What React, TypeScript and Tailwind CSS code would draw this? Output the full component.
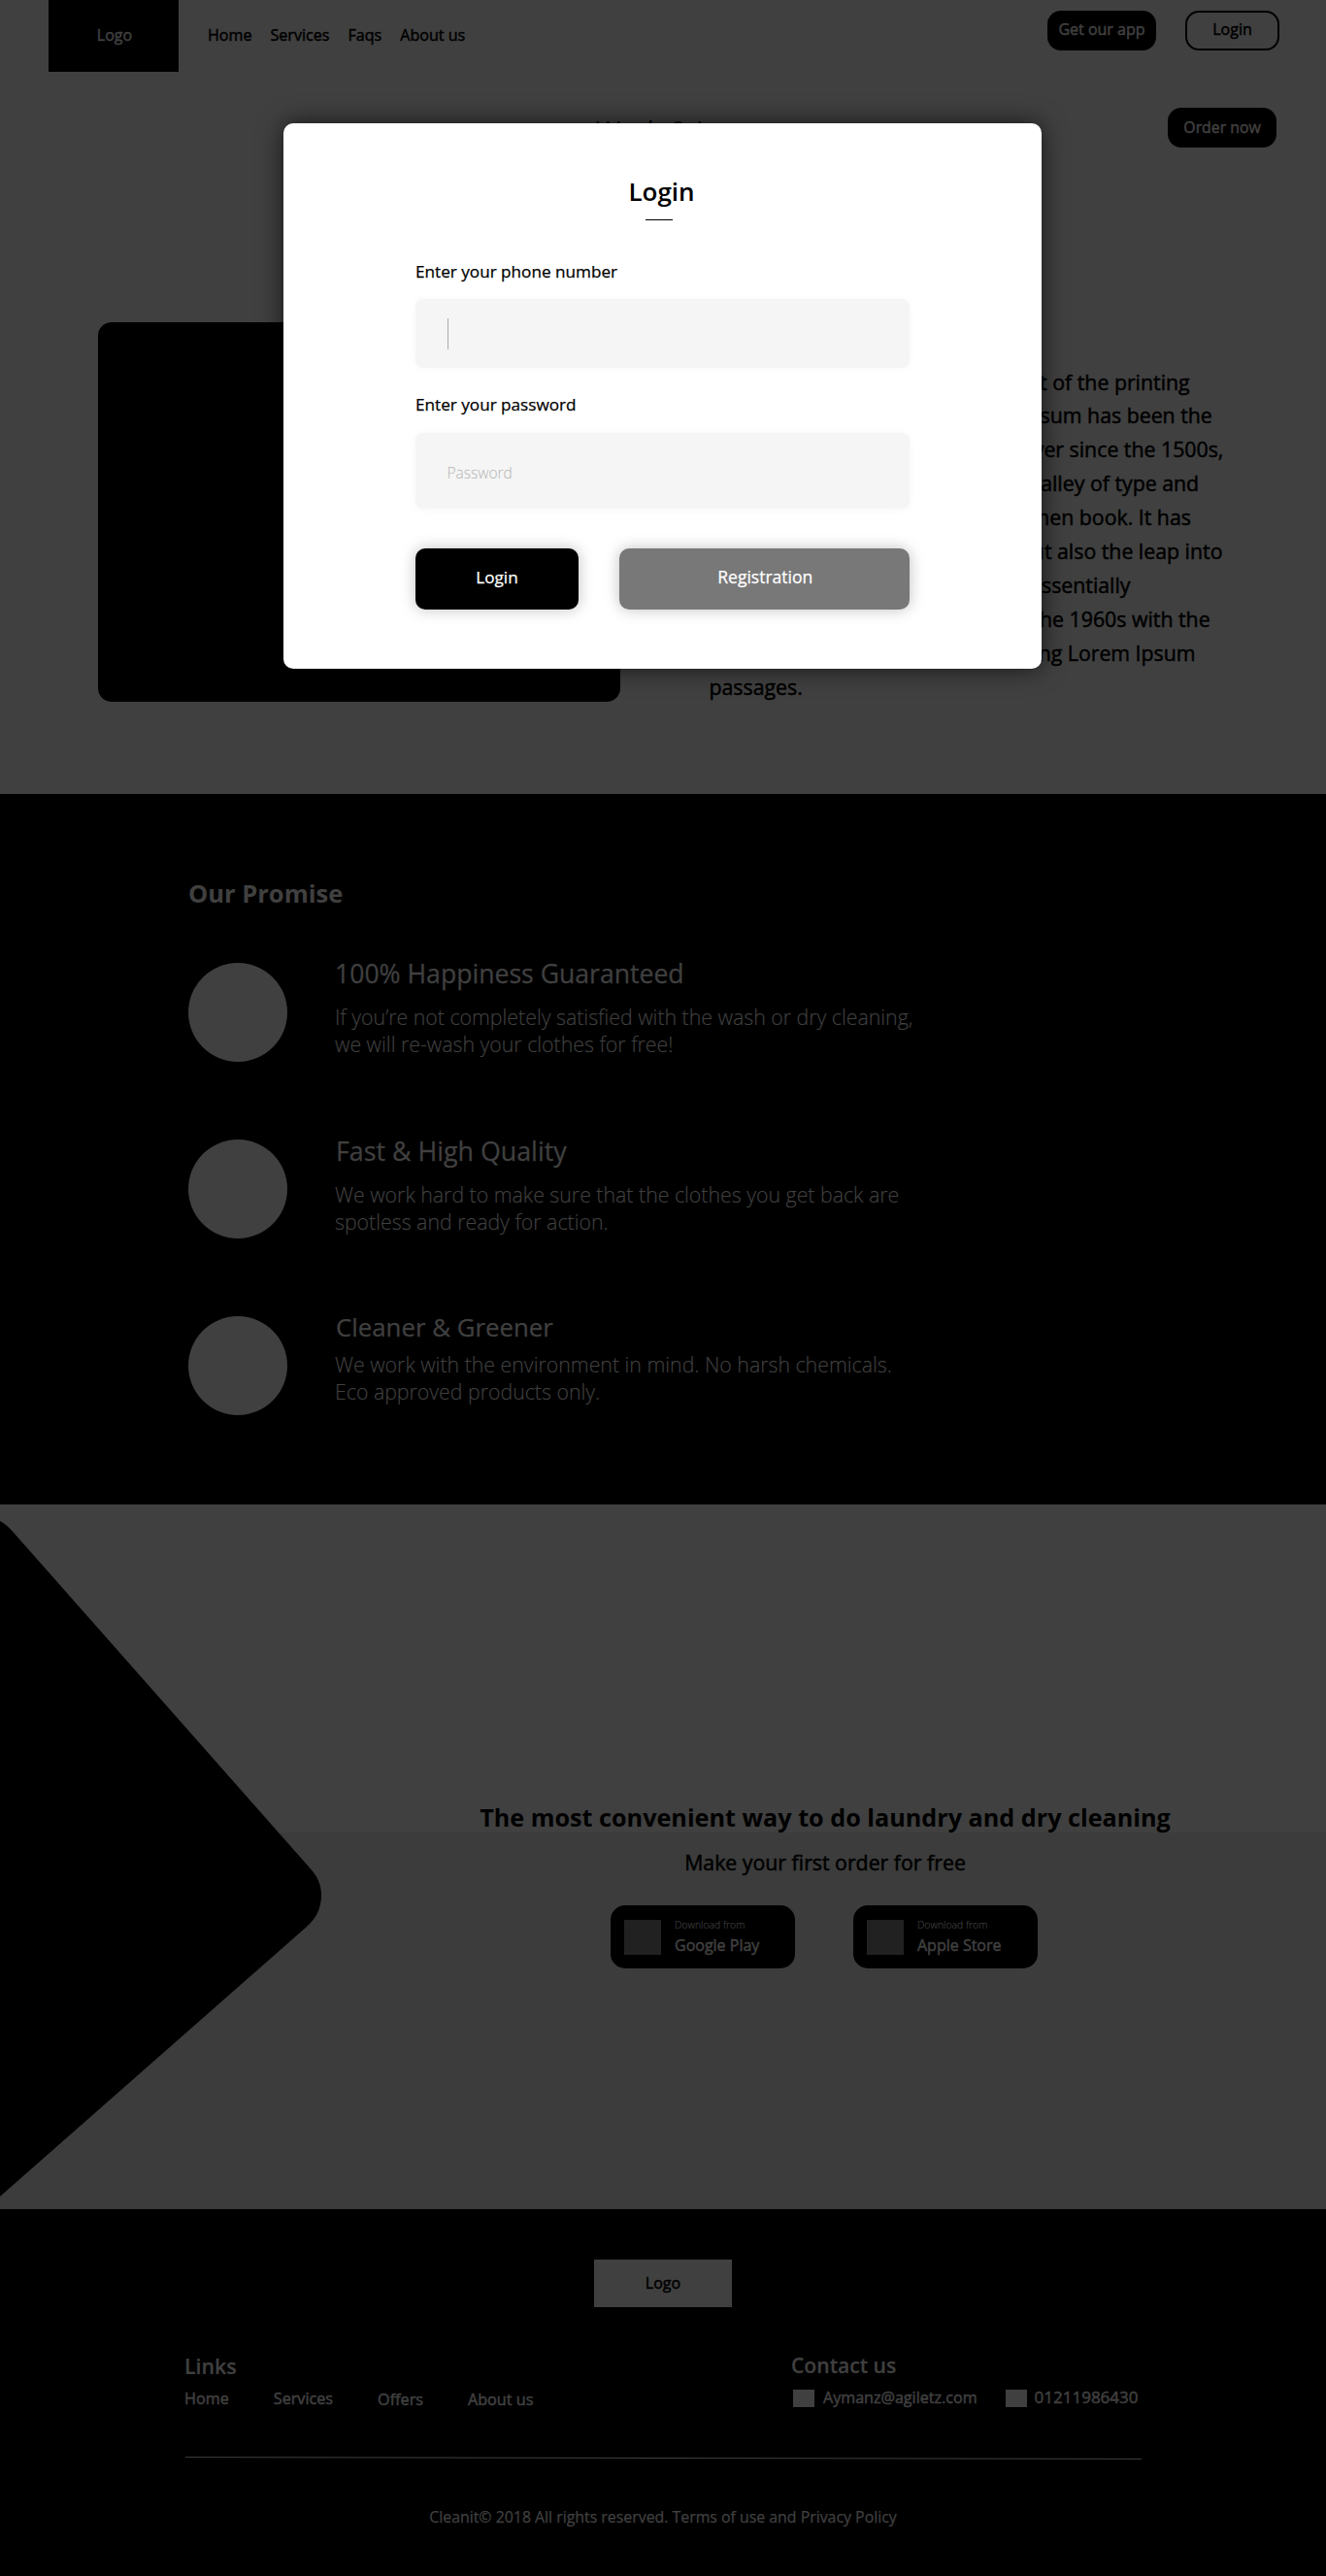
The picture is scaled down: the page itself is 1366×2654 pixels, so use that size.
const medium = "[-webkit-text-stroke:0.5px]";
const book = "[-webkit-text-stroke:0.25px]";

const paragraph = [
  "Lorem Ipsum is simply dummy text of the printing",
  "and typesetting industry. Lorem Ipsum has been the",
  "industry's standard dummy text ever since the 1500s,",
  "when an unknown printer took a galley of type and",
  "scrambled it to make a type specimen book. It has",
  "survived not only five centuries, but also the leap into",
  "electronic typesetting, remaining essentially",
  "unchanged. It was popularised in the 1960s with the",
  "release of Letraset sheets containing Lorem Ipsum",
  "passages.",
];

const promises = [
  {
    title: "100% Happiness Guaranteed",
    titleClass: "-mt-[5px] text-[26.6px]",
    bodyClass: "mt-[15px]",
    lines: ["If you’re not completely satisfied with the wash or dry cleaning,", "we will re-wash your clothes for free!"],
  },
  {
    title: "Fast & High Quality",
    titleClass: "-mt-[4px] ml-[1px] text-[26.8px]",
    bodyClass: "mt-[15px]",
    lines: ["We work hard to make sure that the clothes you get back are", "spotless and ready for action."],
  },
  {
    title: "Cleaner & Greener",
    titleClass: "-mt-[5px] ml-[1px] text-[25.8px]",
    bodyClass: "mt-[9px]",
    lines: ["We work with the environment in mind. No harsh chemicals.", "Eco approved products only."],
  },
];

function Header() {
  return (
    <header className="flex h-[74px] pr-12 pl-[50px] text-[16px]">
      <div className={`flex h-[74px] w-[134px] items-center justify-center bg-black pb-[2px] pl-[2px] text-[#404040] ${medium}`}>Logo</div>
      <nav className={`ml-[30px] flex h-[72px] items-center gap-[19px] text-[16.1px] ${medium}`}>
        <a>Home</a>
        <a>Services</a>
        <a>Faqs</a>
        <a>About us</a>
      </nav>
      <div className={`mt-[11px] ml-auto flex h-[41px] gap-[30px] ${medium}`}>
        <button className="flex w-[112px] items-center justify-center rounded-[14px] bg-black pb-[3px] text-[#404040]">Get our app</button>
        <button className="flex w-[97px] items-center justify-center rounded-[14px] border-2 border-black pb-[3px]">Login</button>
      </div>
    </header>
  );
}

function Hero() {
  return (
    <section className="h-[744px] pt-[37px]">
      <div className="flex h-[41px] pr-[51px] pl-[614px]">
        <h1 className="mt-[3px] text-[27px] leading-[41px]">Wash &amp; Iron</h1>
        <button className={`ml-auto flex w-[112px] items-center justify-center rounded-[14px] bg-black text-[15.8px] text-[#404040] ${medium}`}>
          Order now
        </button>
      </div>
      <div className="mt-[180px] flex gap-[91.5px] pl-[101px]">
        <div className="h-[391px] w-[538px] shrink-0 rounded-[14px] bg-black" />
        <p className={`pt-[44.5px] text-[21.3px] leading-[34.95px] ${medium}`}>
          {paragraph.map((line) => (
            <span key={line} className="block">{line}</span>
          ))}
        </p>
      </div>
    </section>
  );
}

function Promise() {
  return (
    <section className="h-[732px] bg-black pt-[85.5px] pl-[194px] text-[#404040]">
      <h2 className="text-[25.5px] leading-8 font-bold">Our Promise</h2>
      <div className="mt-14 flex flex-col gap-20">
        {promises.map((p) => (
          <div key={p.title} className="flex h-[102px] gap-[49px]">
            <div className="size-[102px] shrink-0 rounded-full bg-[#404040]" />
            <div>
              <h3 className={`leading-8 ${book} ${p.titleClass}`}>{p.title}</h3>
              <p className={`text-[21.3px] leading-[28.4px] font-light [-webkit-text-stroke:0.15px] ${p.bodyClass}`}>
                {p.lines.map((l) => (
                  <span key={l} className="block">{l}</span>
                ))}
              </p>
            </div>
          </div>
        ))}
      </div>
    </section>
  );
}

function StoreButton({ name }: { name: string }) {
  return (
    <button className="flex h-[65px] w-[190px] rounded-[15px] bg-black pl-[14.5px] text-left text-[#404040]">
      <span className="mt-[15px] h-[36px] w-[38px] bg-[#212121]" />
      <span className="ml-[14px] pt-[14px]">
        <span className="block text-[10.4px] leading-3 font-light [-webkit-text-stroke:0.15px]">Download from</span>
        <span className={`mt-[5px] block text-[16px] leading-5 ${medium}`}>{name}</span>
      </span>
    </button>
  );
}

function Download() {
  return (
    <section className="relative h-[726px] bg-[linear-gradient(#404040_338px,#3c3c3c_338px)] pt-[305px] pl-[485px]">
      <svg className="absolute top-0 left-0" width="340" height="726" viewBox="0 0 340 726">
        <path d="M0 17C4 19 9 23 14 29L320 375.400C327 383 331 392 331 402C331 416 326 426 316 435L0 713Z" fill="#000" />
      </svg>
      <div className="flex w-[730px] flex-col items-center">
        <h2 className="text-[25.2px] leading-[34px] font-bold">The most convenient way to do laundry and dry cleaning</h2>
        <p className={`mt-[15.5px] text-[21.3px] leading-7 ${medium}`}>Make your first order for free</p>
        <div className="mt-[30px] mr-[3px] flex gap-[60px]">
          <StoreButton name="Google Play" />
          <StoreButton name="Apple Store" />
        </div>
      </div>
    </section>
  );
}

function Footer() {
  return (
    <footer className="h-[378px] bg-black pt-[52px] text-[#404040]">
      <div className={`mx-auto flex h-[49px] w-[142px] items-center justify-center bg-[#404040] pb-[2px] text-[16px] text-black ${medium}`}>Logo</div>
      <div className="mt-[47px] flex h-[58px] pl-[190px]">
        <div className="w-[625px]">
          <h3 className="text-[21.3px] leading-7 font-semibold [-webkit-text-stroke:0.2px]">Links</h3>
          <nav className={`mt-[8px] flex gap-[46px] text-[16.2px] leading-[22px] ${medium}`}>
            <a>Home</a>
            <a>Services</a>
            <a className="mt-px">Offers</a>
            <a className="mt-px">About us</a>
          </nav>
        </div>
        <div className="-mt-px">
          <h3 className="text-[21.1px] leading-7 font-semibold [-webkit-text-stroke:0.2px]">Contact us</h3>
          <div className={`mt-[7.500px] flex items-center text-[16.1px] leading-[22px] ${medium}`}>
            <span className="mt-[3px] ml-[2px] h-[18px] w-[22px] bg-[#404040]" />
            <span className="ml-[9px]">Aymanz@agiletz.com</span>
            <span className="mt-[3px] ml-[29px] h-[18px] w-[22px] bg-[#404040]" />
            <span className="ml-[8px] text-[17px]">01211986430</span>
          </div>
        </div>
      </div>
      <svg className="mt-[48px] ml-[191px]" width="985" height="5" viewBox="0 0 985 5">
        <path d="M0 1.600L985 3.400" stroke="#404040" strokeWidth="1" />
      </svg>
      <p className={`mt-[47px] text-center text-[15.86px] leading-[22px] ${book}`}>
        Cleanit© 2018 All rights reserved. Terms of use and Privacy Policy
      </p>
    </footer>
  );
}

function LoginDialog() {
  return (
    <div
      role="dialog"
      className="absolute top-[127px] left-[292px] flex h-[562px] w-[781px] flex-col rounded-[10px] bg-white px-[136px] pt-[53px] text-[17.15px] shadow-[0_0_26px_rgba(0,0,0,0.65)]"
    >
      <h2 className="mr-[2px] text-center text-[26px] leading-[34px] font-semibold">Login</h2>
      <div className="mt-[12px] ml-[237px] h-px w-[28px] bg-black" />
      <label className={`mt-[40.500px] leading-6 ${book}`}>Enter your phone number</label>
      <div className="mt-[16.500px] flex h-[71px] items-center rounded-[8px] bg-[#f5f5f5] pl-[33px] shadow-[0_0_10px_rgba(0,0,0,0.03)]">
        <span className="h-[32px] w-px bg-[#aaaaaa]" />
      </div>
      <label className={`mt-[25.500px] leading-6 ${book}`}>Enter your password</label>
      <input
        type="text"
        placeholder="Password"
        className="mt-[17px] h-[78px] rounded-[8px] bg-[#f5f5f5] pt-[5px] pl-[32.5px] text-[15.5px] font-light shadow-[0_1px_10px_rgba(0,0,0,0.04)] placeholder:text-[#b4b4b4]"
      />
      <div className={`mt-[41.500px] flex h-[63px] gap-[41.500px] text-white ${book}`}>
        <button className="w-[168px] rounded-[10px] bg-black pb-[4px] shadow-[0_0_15px_rgba(0,0,0,0.25)]">Login</button>
        <button className="w-[299.500px] rounded-[10px] bg-[#787878] pb-[4px] pl-[2px] text-[17.5px] shadow-[0_0_15px_rgba(0,0,0,0.25)]">Registration</button>
      </div>
    </div>
  );
}

export default function App() {
  return (
    <div className="relative h-[2654px] w-[1366px] overflow-hidden bg-[#404040] font-['Open_Sans','Noto_Sans',sans-serif] whitespace-nowrap text-black">
      <Header />
      <Hero />
      <Promise />
      <Download />
      <Footer />
      <LoginDialog />
    </div>
  );
}
